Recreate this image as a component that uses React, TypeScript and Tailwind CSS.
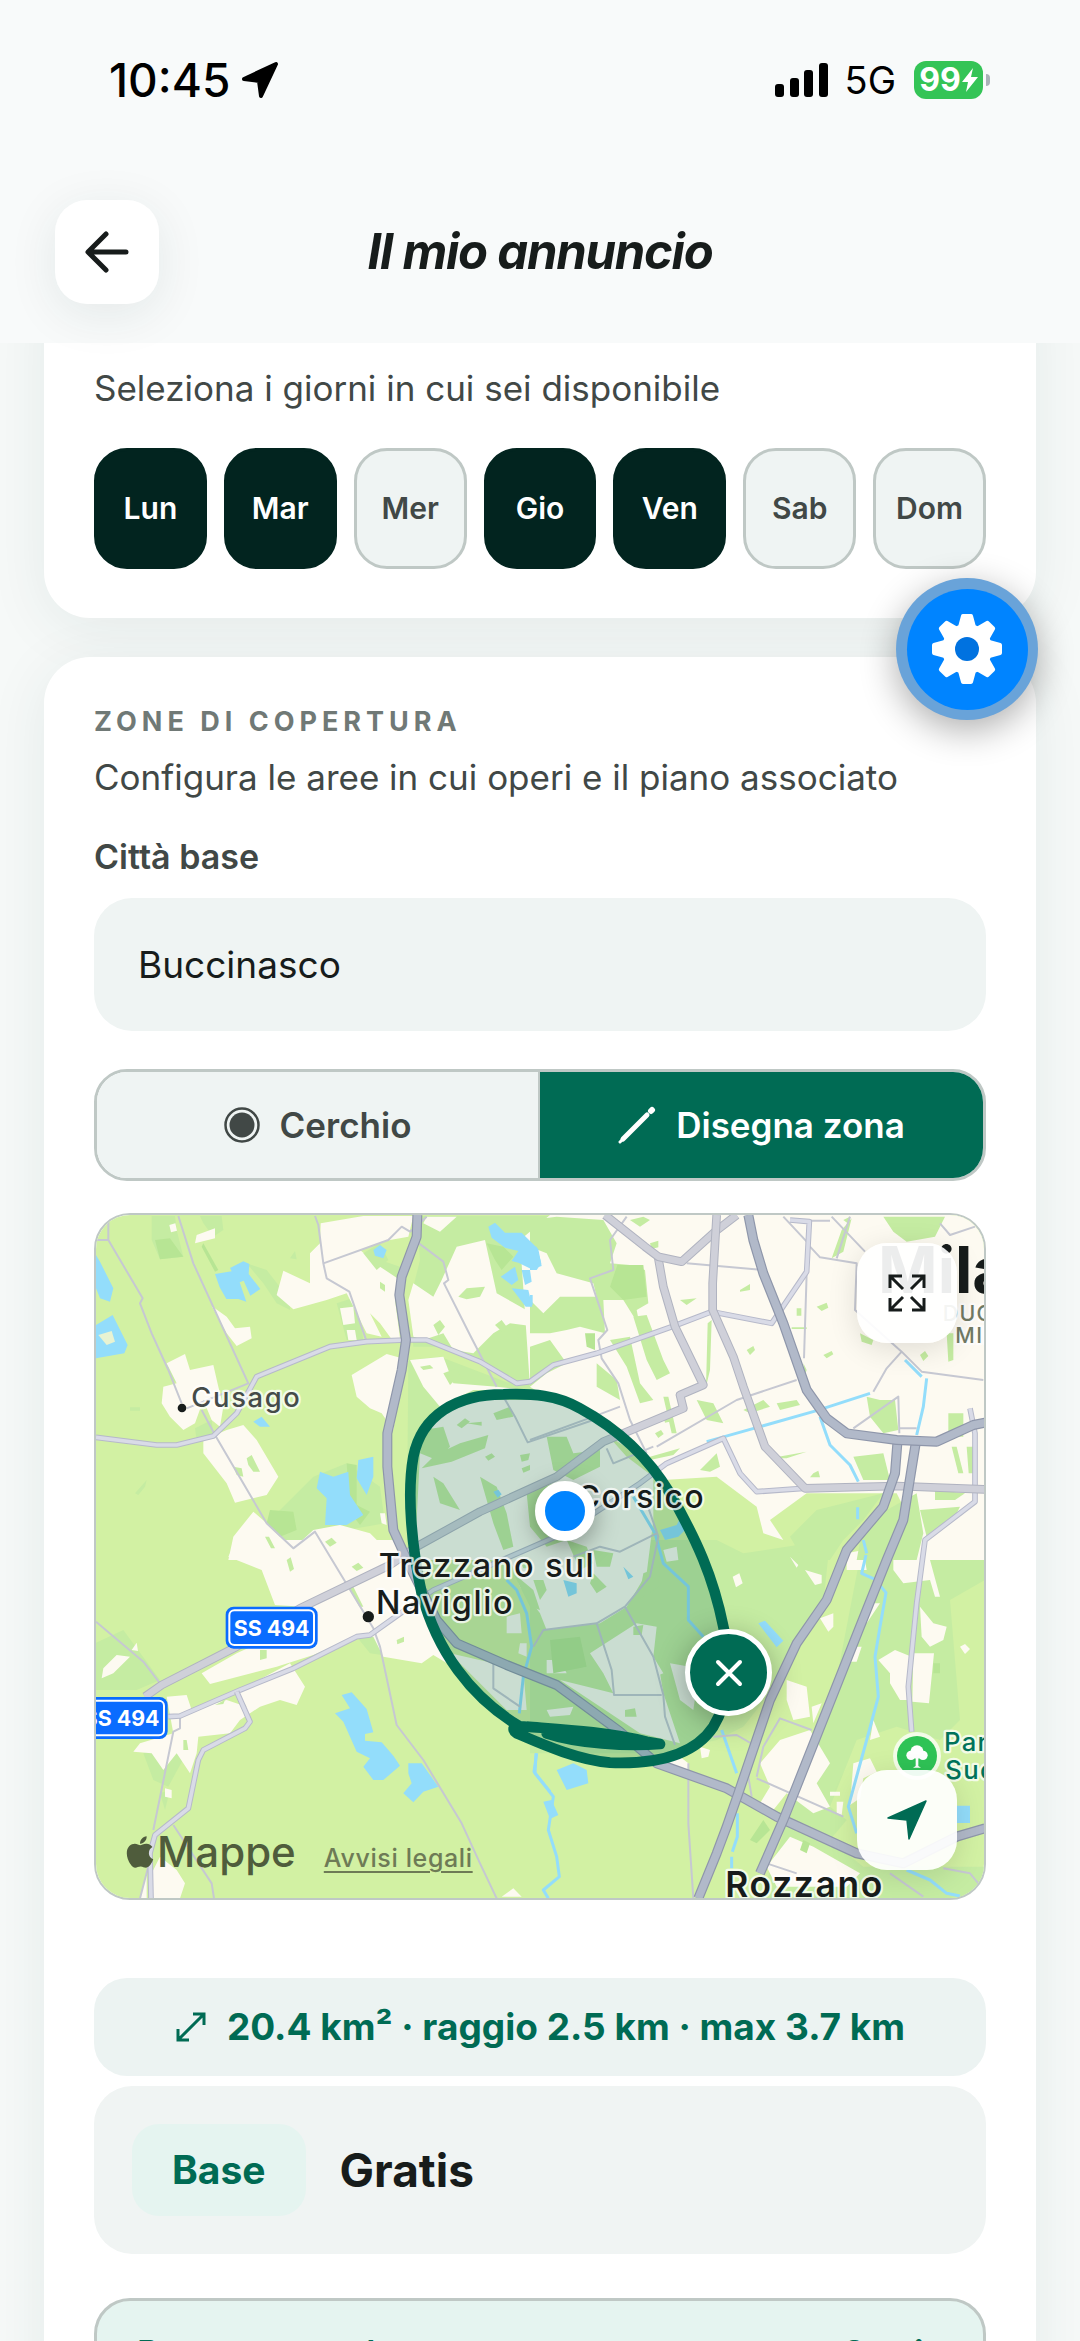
import { useState } from "react";
import type { ReactNode } from "react";
import { FaApple } from "react-icons/fa";

type Mode = "circle" | "draw";
type RoadKind = "highway" | "primary" | "secondary";
type Road = { kind: RoadKind; d: string };

const DAYS = ["Lun", "Mar", "Mer", "Gio", "Ven", "Sab", "Dom"];

const ROAD_STYLE: Record<
  RoadKind,
  { casing: string; fill: string; outer: number; inner: number }
> = {
  highway: { casing: "#8e96aa", fill: "#b1b9c9", outer: 30, inner: 23 },
  primary: { casing: "#b0b3c0", fill: "#cfd0d9", outer: 26, inner: 20 },
  secondary: { casing: "#b6b9ca", fill: "#d9dbe7", outer: 17, inner: 11 },
};

// Map sections: land polygons are drawn relative to the section's own origin.
const NW = "translate(0 0)";
const NE = "translate(1350 0)";
const SW = "translate(0 1020)";
const SE = "translate(1350 1020)";
const CENTER = "translate(840 480)";

const MEADOW: [string, string][] = [
  [
    NW,
    "M215 48H285L290 90L310 170L240 178L215 120Z M360 48H425L430 90L400 110L370 70Z M500 190L560 210L630 300L630 330L590 310L550 250Z M730 200L840 160L960 200L950 290L900 260L905 300L945 360L940 400L900 330L850 270Z M1010 48H1410V600L1300 560L1190 470L1090 440L1000 440L990 300L1020 180Z M260 500L310 480L345 540L280 545Z M700 830L800 790L900 860L915 970L800 990L640 1040L560 970L640 890Z M985 480L1080 470L1340 570L1410 600V1080H980Z M770 310L830 290L850 420L800 420Z M345 685L395 660L400 705L350 720Z M630 175l15-22l5 25Z M165 880l35-40l-5 20l-20 25Z M150 622h30v10h-30Z",
  ],
  [
    SW,
    "M45 310L130 270L240 420L170 450L48 450Z M190 640L290 600L330 620L265 740L220 720Z M830 290L890 290L905 345L870 340Z M240 760L270 750L255 810Z",
  ],
  [
    SE,
    "M0 0H560L640 40L900 0L880 190L790 310L720 460L640 560L560 600L400 640L0 640Z M1000 0H1365V120L1260 180L1290 540L1230 600L1100 560L980 600L900 800L950 840L900 900L1000 980H1365V1080H690L760 880L900 520Z",
  ],
];

const URBAN: [string, string][] = [
  [
    NW,
    "M722 70L850 48H1000L985 110L930 120L840 150L900 200L960 240L945 300L960 415L935 418L900 370L870 340L905 410L860 400L800 280L740 300L640 328L590 285L610 212L690 250L690 160L720 130Z M345 130L350 105L405 85L405 115Z M268 75l18-5l5 22l-18 5Z M780 325l40-5l5 50l-35 5Z M800 390l25 0l5 30l-25 0Z M395 318L440 350L465 385L510 380L515 415L470 438L440 400Z M260 490L315 462L330 510L400 495L415 560L430 620L420 680L395 660L370 600L345 670L310 690L270 650L245 610L250 560L290 550Z M370 720L440 690L490 675L530 720L595 830L560 885L465 908L440 850L370 760Z M815 525L920 462L985 480L960 560L940 690L905 640L870 625L830 590Z M1000 250L1060 290L1085 240L1130 140L1215 120L1250 280L1375 350L1370 380L1290 370L1240 400L1180 460L1120 450L1090 400L1030 420L1000 410L985 300Z M1030 70L1080 95L1130 50H1040Z M1370 80L1410 60V130L1380 120Z M990 480L1090 470L1120 550L1250 560L1340 570H1180L1080 620L1030 560Z M445 1080L460 1010L520 935L560 970L640 1045L700 990L780 975L870 1000L930 1060L960 1080Z M900 940l15 0l5 35l-15-5Z",
  ],
  [
    NE,
    "M-30 120L60 45H1370V1080H1180L1170 1020L1100 880L830 880L720 960L760 1020L700 1000L680 920L560 830L400 840L350 780L0 560Z",
  ],
  [
    SW,
    "M445 50L470 0H960L990 60L1010 160L1050 260L1110 375L1060 345L1025 370L910 350L880 290L830 290L700 345L590 380L390 432L365 400L470 340L600 280L670 200L585 195L545 90Z M500 500L470 455L630 370L675 440L650 495L600 480L540 500L480 540L450 580L355 590L350 640L330 700L290 640L250 690L215 640L160 635L180 610L280 580L260 470L320 465L335 510L440 480Z M65 415L70 385L110 345L150 350L100 400Z M155 330l15-22l4 25Z M215 1075V1000L240 950L290 990L315 1030L300 1075Z M180 1075L200 1000V1075Z M1265 1070L1300 1045L1325 1070Z M255 745l20 5l0 25l-20-5Z",
  ],
  [
    SE,
    "M1090 0h170v40l-60 20l30 110l-15 0l-15-50l-80 10l-30-40Z M1150 340h62l-15 150l-50-5Z M1045 360l50-30l50 20l0 40l-10 90l-25 0l-30-50l0-30Z M1170 200l40 50l40 10l-10 40l-40 20l-25-30Z M870 235l40-15l0 40l-15 15Z M1020 190l30 0l-40 60Z M980 320l15 0l-15 45l-20 0Z M770 420l60 20l10 90l-50 10l-20-60Z M845 500l30-10l-25 60Z M690 670l60-70l90-30l60 100l-40 60l40 70l-50 20l-80-60l-40 50l-40-20l30-50Z M970 670l50-15l20 40l-40 20l-10 60l-30 20Z M780 890L850 920L990 1000L950 1040L740 1040L710 980Z M1030 540l20 50l-30 10Z M825 90l50 15l0 25l-20 5Z M608 110l20-10l10 30l-20 12Z M780 50l25 25l-5 8Z M950 40l50-10l10 60l-60 0Z M450 650l25 20l0 20l-90-20Z M510 620l30 10l-5 20l-20 5Z M1290 320l15-8l15 15l-15 15Z M900 755h30v12h-30Z M920 785l20 0l-5 40l-15-5Z",
  ],
  [
    CENTER,
    "M180 280L200 180L260 120L600 120L720 200L800 290L880 350L880 480L870 560L860 640L800 740L720 790L560 810L540 760L480 680L450 600L170 600L170 480Z M270 880L490 930L500 1050L440 1050L350 960Z M600 960L760 1000L900 940L910 1000L960 1150L840 1120Z M690 880L830 790L890 800L880 890L910 940L760 1000L730 940Z M440 770l40-10l5 60l-45 0Z M480 850l20 0l0 40l-25-10Z M560 900l40 0l20 40l-60 0Z M560 1050l80-10l-10 25l-60 5Z M910 570l40-10l5 40l-35 5Z M930 910l60 10l20 60l-10 70l-40-30Z",
  ],
];

const PARKS: [string, string][] = [
  [
    NW,
    "M850 160L900 130L925 180L890 210Z M900 245l15 10l0 20l-15-10Z M1135 290L1160 265L1215 260L1200 290L1160 298Z M1060 375l20-15l15 20l-20 25Z M1245 375l20-15l15 20l-10 20Z M500 775l15-10l25 50l-20 0l-15-20Z M1020 500l30-5l10 10l-30 5Z M1090 520l40-15l10 20l-30 30Z M555 1010l12 0l18 35l-12 0Z M735 1025l20-12l15 15l-20 12Z M460 800l25 5l5 25l-20-5Z",
  ],
  [
    NE,
    "M0 60L80 50L220 60L260 130L240 190L300 195L345 210L355 310L320 330L330 380L280 300L220 300L225 400L150 380L110 390L60 400L0 400V300L40 340L90 290L200 290L190 250L80 220L50 160L0 140Z M545 360l-5 150l-12 50l5-190Z M1060 50H1245L1215 110L1130 125L1090 95Z M935 90l30-35l-25 100l-35 20Z M310 350L350 345L400 480L420 520L380 540L350 480Z M240 420L300 410L330 550L370 600L330 610L290 500Z M500 600l50 10l30 60l-50-10Z M640 630l60-30l20 20l-60 20Z M740 610l60-10l10 15l-60 15Z M400 590l15 0l25 110l-15 0Z M1010 590L1050 600L1095 600L1105 690L1060 700L1020 650Z M1255 640H1300V710H1255Z M1265 740h15l20 80h-15Z M1310 740h22v80h-16Z M970 770L1060 760L1080 840L1000 840Z M860 320l30-12l5 15l-20 10Z M880 465l25-12l5 10l-20 12Z M650 450l20-12l5 12l-15 15Z M990 400l40 20l-5 15l-30-10Z M1170 465l15-12l10 15l-15 15Z M1250 400h20v80l-15 5Z M630 270l30-18l0 18l-30 5Z M450 300l50-5l-30 20Z M800 325h14v22h-14Z M785 382h45v5h-45Z M300 60l40-10l20 10l-30 20Z M360 130l25-8l0 20l-20 5Z M820 490l10 20l-5 15Z M850 820l15-8l5 20h-30Z M720 775l110-20l-60 20Z M360 770l90-25l-20 20l-70 15Z M510 810L560 760L570 800L540 815Z M0 440L60 420L110 490L50 520L0 560Z M200 490L260 540L270 600L200 560Z M860 930L1060 880L1000 960L940 1020L900 1080L820 1080L780 1010Z M1000 970L1160 880L1180 1000L1160 1080H980Z M1170 930L1290 920L1270 960L1190 1010Z M1215 870l90 10l-30 20l-60 0Z M940 60l20-10l0 25Z M400 650l20-6l5 20l-20 4Z M375 700l18-10l8 12l-16 12Z",
  ],
  [
    SW,
    "M620 60l12-8l10 35l-12 8Z M815 80l20-12l15 15l-20 10Z M800 130l20 10l30 60l-12 0Z M540 330l20 0l0 25l-20 5Z M950 300l22-10l0 15l-20 8Z M405 495l30-15l-5 12Z M310 600l10 0l5 30l-15 0Z",
  ],
  [
    CENTER,
    "M190 210l60-10l20 60l-40 40l-50-20Z M560 230l60 0l20 50l80-10l0 50l-80 40l-60-30Z M300 250l85-25l-10 40l-100 40l-90 20l40-40Z M360 350l50 30l30 80l20 100l-30 10l-30-80Z M220 350l30 20l50 80l-60-20Z M500 400l80-30l40 170l-60 20l-50-60Z M620 540l60 20l20 50l-40 20Z M850 640l50-20l-5 60l-60 40Z M375 290l20-10l10 10l-20 12Z M480 285l30-5l-5 20l-20 5Z M485 325l25-10l0 15l-20 8Z M290 195l25-20l15 10l-25 20Z M320 190l45-5l0 12Z M400 160l50-20l10 30l-50 10Z M700 570l60 10l-10 40l-40 0Z M480 600l30-5l10 30l-30 0Z M460 640l60 50l20 60l-30-10Z M795 1050l30-5l5 25l-35 0Z M770 800l30-8l0 12l-30 10Z M820 800l30-5l-5 30l-25 0Z M520 660l30 0l10 30l-20 30Z M700 640l40 40l-30 20l-20-30Z",
  ],
];

const FOREST: [string, string][] = [
  [
    NW,
    "M225 120L270 115L310 170L240 178Z M570 930L640 935L650 990L600 1010L560 970Z M370 130l45 80l-10 5l-40-75Z M1220 130L1270 140L1300 170L1265 210L1245 180Z M800 790l30 5l0 120l40 20l-30 40l-30-40Z",
  ],
  [NE, "M262 195H340L350 290L280 300L240 260Z M165 400h30l0 50l-25-10Z"],
  [
    SE,
    "M60 300l90-10l20 90l-100 20Z M820 900l20 10l-10 30l-20-10Z M660 900l40-60l20 30l-40 40Z M1210 370h20v30h-20Z",
  ],
];

const WATER: [string, string][] = [
  [
    NW,
    "M405 222l50-8l-5-10l40-20l18 8l-2 30l35 45l-30 20l-20-45l-12 5l20 58l-24-8l-36 0l-20-35Z M48 165l12 20l40 80l-10 40l-30-10l-12-30Z M48 375l50-30l45 90l-10 25l-85 15Z M880 150l20-15l20 15l-10 25l-25-8Z M1225 80l20-12l30 30l50 0l50 50l10 50l-30 10l-40-20l-20-5l20-30l-40-10l-40-30Z M1262 230l43-30l10 40l-20 15Z M1325 210l25 0l5 35l-20 10Z M1295 265l50 5l12 50l-20 0Z M520 665l25-15l25 30l-30 0Z M720 815l40 15l45-15l5 70l40 60l-50 30l-65 0l5-80l-30-30Z M835 780l45-10l0 60l-20 55l-30-50Z",
  ],
  [NE, "M0 140l20 0l14 50l-14 20h-20Z M0 285h8v30h-8Z"],
  [
    SW,
    "M785 465l30-8l45 50l20 70l-25 5l0 20l50 5l35 40l20 30l-50 43l-30 0l-30-40l20-25l-40-20l-40-90l-25-25l45-15Z M985 670l40 0l50 70l-45 15l-30 32l-30-27l25-30l-10-30Z",
  ],
  [
    SE,
    "M685 250l20-8l55 60l-20 20Z M80 690l50-20l40 20l5 40l-65 20Z M1280 797h40v52h-40Z M40 785l25-5l20 45l-25 12Z",
  ],
  [
    CENTER,
    "M900 510l50-15l20-40l25 35l-40 40l-40 10Z M610 660l40 10l0 30l-25 10Z M790 620l30 30l-15 8Z M400 395l15-6l10 14l-12 10Z",
  ],
];

const STREAMS: [string, string][] = [
  [
    NE,
    "M1125 480L1175 530M1190 535L1180 620L1160 705M870 650L900 735L960 795L985 845M530 725L860 632L1020 580M983 922V958M1000 1020L1010 1060",
  ],
  [SW, "M1368 640L1365 700L1410 755"],
  [
    SE,
    "M1008 45L995 100L1035 118L1068 158L1050 260L1035 350L1045 470L1010 600L955 800L980 880M575 570L620 700M622 820V890L607 935M605 950V985M20 640L12 695L70 770L55 870L80 950L88 1010L40 1050L55 1075M1130 990L1200 1020L1250 1060L1290 1068",
  ],
  [
    CENTER,
    "M820 410L885 520L910 610L985 680V780L1030 830M440 660L470 690L500 760L515 860L490 950L478 1060",
  ],
];

const STREETS: [string, string][] = [
  [
    NW,
    "M85 45V120H48M85 120L188 295L180 310L215 400L265 510L305 610M295 48L340 190L505 550L320 625M705 48L715 75L730 190L740 235L808 275L860 425M730 190L925 120L965 80L990 95L1040 50M1010 125L1090 185L1105 240L1092 250L1170 405L1250 560M365 630L405 705L560 970L640 1045L705 995L880 1285L900 1340L950 1575L1030 1680L1145 1870L1200 1990L1250 2095M48 1265L190 1385L240 1450M300 1550L300 1585L280 1595L220 1890M180 2095L210 1980M280 1875L395 2050L402 2095",
  ],
  [
    NE,
    "M290 50L240 120L250 210L180 235L232 390L205 420L215 475L265 550L300 660L350 760M470 190L700 210M830 220L822 475M905 50L1005 155M840 140L870 172L980 190L975 330L1115 455L1175 515L1360 540M1115 455L1070 505L1030 575M970 685L1105 590L1108 700M760 50L835 130M960 50L920 175M1230 70L1260 105L1335 80M380 740L620 600L800 540M0 720L190 650L270 620M1108 685H1160M780 62H900",
  ],
  [
    SE,
    "M680 710L700 620L750 535L845 570M680 715L940 830M475 670V850L490 1075M710 970L800 1000M550 590L620 585L680 620L655 710L665 770M1080 1000L1180 1070M1240 985L1320 1000L1345 1030",
  ],
  [
    CENTER,
    "M430 110L465 170L503 247L700 180M400 900V985L480 1040M520 860L550 810L710 790L795 740L870 650L895 530L850 400M795 740L880 890L910 1005L915 1070L945 1155M710 790L755 930L762 1005H905M640 590L720 560L780 575L890 520M740 265L760 310L880 260",
  ],
];

const ROADS: Road[] = [
  {
    kind: "secondary",
    d: "M48 712L230 735L290 735L400 708L470 640L530 530L750 440L860 425L975 420L1040 420L1200 485L1310 550L1350 545L1420 495L1550 460L1790 375L1895 335L2075 370L2180 215L2188 65L2130 60",
  },
  {
    kind: "secondary",
    d: "M265 1550L300 1548L480 1470L640 1405L830 1310L870 1305L940 1255L1060 1170L1290 1070L1450 1000L1680 850L1760 790L1930 715L1980 820L2030 875L2170 865",
  },
  {
    kind: "secondary",
    d: "M470 1475L510 1565L495 1585L370 1650L355 1680L325 1825L225 1905L210 1960L213 2095",
  },
  {
    kind: "secondary",
    d: "M2670 625L2685 700V905L2535 1020L2510 1210L2485 1460L2495 1595",
  },
  {
    kind: "primary",
    d: "M195 1490L245 1455L470 1340L660 1225L930 1095L1010 1040L1200 935L1430 830L1570 725L1810 625L1800 585L1870 555L1785 380L1750 260L1735 175",
  },
  { kind: "primary", d: "M1575 45L1695 140L1735 170L1805 185L1905 95L1970 45" },
  {
    kind: "primary",
    d: "M1910 45L1898 250V330L1960 470L1990 560L2055 740L2175 865L2450 858L2715 868",
  },
  {
    kind: "highway",
    d: "M1012 45L1010 110L965 230L958 285L978 420L965 510L922 700V800L940 990L990 1100L1070 1260L1130 1330L1280 1395L1430 1455L1620 1595L1730 1690L1940 1765L2090 1850L2330 1960L2470 1990L2630 1910L2715 1885",
  },
  {
    kind: "highway",
    d: "M2452 730L2445 820L2410 920L2300 1050L2240 1200L2150 1330L2070 1500L1975 1780L1940 1880L1910 1960L1855 2095",
  },
  {
    kind: "highway",
    d: "M2507 730L2470 960L2420 1080L2340 1280L2110 1860L2040 2020",
  },
  {
    kind: "highway",
    d: "M2005 45L2020 120L2050 220L2110 370L2180 570L2240 655L2300 700L2450 720L2570 725L2680 675L2715 668",
  },
];

const ZONE_PATH =
  "M480 1100C330 1010 230 870 185 700C155 560 140 400 160 290C185 165 290 103 430 103C520 100 590 105 660 145C780 210 870 300 930 400C1010 540 1060 650 1090 800C1115 900 1110 1020 1060 1100C1000 1190 880 1213 750 1208C650 1200 540 1150 470 1120C450 1105 465 1095 500 1100C600 1108 740 1115 860 1145L900 1152C800 1160 650 1150 560 1120";

function Land({ layer, fill }: { layer: [string, string][]; fill: string }) {
  return (
    <g fill={fill}>
      {layer.map(([section, d]) => (
        <path key={section} transform={section} d={d} />
      ))}
    </g>
  );
}

function Lines({
  layer,
  stroke,
  width,
}: {
  layer: [string, string][];
  stroke: string;
  width: number;
}) {
  return (
    <g fill="none" stroke={stroke} strokeWidth={width} strokeLinejoin="round">
      {layer.map(([section, d]) => (
        <path key={section} transform={section} d={d} />
      ))}
    </g>
  );
}

function RoadShield({ x, y }: { x: number; y: number }) {
  return (
    <g transform={`translate(${x} ${y})`}>
      <rect width="276" height="126" rx="24" fill="#0a6cff" />
      <rect
        x="11"
        y="11"
        width="254"
        height="104"
        rx="15"
        fill="none"
        stroke="#fff"
        strokeWidth="6"
      />
      <text
        x="138"
        y="87"
        textAnchor="middle"
        fontSize="64"
        fontWeight="700"
        fill="#fff"
      >
        SS 494
      </text>
    </g>
  );
}

function MapCanvas() {
  return (
    <svg
      viewBox="48 45 2664 2049"
      preserveAspectRatio="xMidYMid slice"
      className="block h-full w-full"
      role="img"
      aria-label="Mappa della zona di copertura"
    >
      <rect x="0" y="0" width="2800" height="2150" fill="#d2f1a3" />
      <Land layer={MEADOW} fill="#c5eca2" />
      <Land layer={URBAN} fill="#fdfaf1" />
      <Land layer={PARKS} fill="#c5eca2" />
      <Land layer={FOREST} fill="#b7e594" />
      <Land layer={WATER} fill="#93ddfb" />
      <path d="M55 405L95 393L105 425L80 435Z" fill="#e8f3d2" />
      <Lines layer={STREAMS} stroke="#93ddfb" width={9} />
      <Lines layer={STREETS} stroke="#c6c8d2" width={6} />

      <g fill="none" strokeLinejoin="round">
        {ROADS.map((road) => (
          <g key={road.d}>
            <path
              d={road.d}
              stroke={ROAD_STYLE[road.kind].casing}
              strokeWidth={ROAD_STYLE[road.kind].outer}
            />
            <path
              d={road.d}
              stroke={ROAD_STYLE[road.kind].fill}
              strokeWidth={ROAD_STYLE[road.kind].inner}
            />
          </g>
        ))}
      </g>

      <path
        transform={CENTER}
        d={ZONE_PATH}
        fill="#006b54"
        fillOpacity="0.2"
        stroke="#006b54"
        strokeWidth="32"
        strokeLinecap="round"
        strokeLinejoin="round"
      />

      <RoadShield x={437} y={1220} />
      <RoadShield x={-13} y={1491} />

      <circle cx="306" cy="624" r="13" fill="#171c1b" />
      <circle cx="865" cy="1250" r="17" fill="#171c1b" />

      <g
        fill="#171c1b"
        stroke="#fff"
        strokeOpacity="0.75"
        strokeWidth="14"
        strokeLinejoin="round"
        paintOrder="stroke"
        fontWeight="500"
      >
        <text x="334" y="622" fontSize="82" letterSpacing="5" fill="#454b49">
          Cusago
        </text>
        <text x="1490" y="925" fontSize="95" letterSpacing="5">
          Corsico
        </text>
        <text x="896" y="1132" fontSize="97" letterSpacing="5">
          Trezzano sul
        </text>
        <text x="888" y="1242" fontSize="97" letterSpacing="5">
          Naviglio
        </text>
        <text x="1936" y="2092" fontSize="106" fontWeight="600" letterSpacing="5">
          Rozzano
        </text>
        <text x="2394" y="278" fontSize="192" fontWeight="700" stroke="none">
          Milano
        </text>
        <text x="2588" y="362" fontSize="64" letterSpacing="4" fill="#717a64">
          DUOMO
        </text>
        <text x="2626" y="428" fontSize="64" letterSpacing="4" fill="#717a64">
          MILANO
        </text>
        <text x="2592" y="1652" fontSize="77" letterSpacing="4" fill="#00735a">
          Parco
        </text>
        <text x="2596" y="1738" fontSize="77" letterSpacing="4" fill="#00735a">
          Sud
        </text>
      </g>

      <circle cx="2511" cy="1668" r="72" fill="#fff" fillOpacity="0.75" />
      <circle cx="2511" cy="1668" r="60" fill="#2fc356" />
      <g fill="#fff">
        <circle cx="2511" cy="1656" r="20" />
        <circle cx="2493" cy="1666" r="14" />
        <circle cx="2529" cy="1666" r="14" />
        <path d="M2507 1672h8v26l8 5h-24l8-5Z" />
      </g>
    </svg>
  );
}

function MapButton({
  label,
  className,
  children,
}: {
  label: string;
  className: string;
  children: ReactNode;
}) {
  return (
    <button
      type="button"
      aria-label={label}
      className={`absolute right-[27px] flex h-[100px] w-[100px] items-center justify-center rounded-[30px] bg-white/92 shadow-[0_6px_30px_rgba(0,0,0,0.12)] ${className}`}
    >
      {children}
    </button>
  );
}

function CoverageMap() {
  return (
    <div className="relative mt-8 h-[687px] overflow-hidden rounded-[36px] border-2 border-[#bfc8c5]">
      <MapCanvas />

      <span className="absolute top-[266px] left-[439px] h-[60px] w-[60px] rounded-full border-10 border-white bg-[#0084ff] shadow-[0_6px_24px_rgba(0,0,0,0.35)]" />

      <button
        type="button"
        aria-label="Cancella zona"
        className="absolute top-[414px] left-[589px] flex h-[87px] w-[87px] items-center justify-center rounded-full border-5 border-white bg-[#006b54] shadow-[0_6px_30px_rgba(0,0,0,0.3)]"
      >
        <svg viewBox="0 0 28 28" className="h-7 w-7" aria-hidden>
          <path
            d="M3 3l22 22M25 3L3 25"
            stroke="#fff"
            strokeWidth="4"
            strokeLinecap="round"
          />
        </svg>
      </button>

      <MapButton label="Espandi mappa" className="top-[28px]">
        <svg
          viewBox="0 0 38 38"
          className="h-[38px] w-[38px]"
          fill="none"
          stroke="#171c1b"
          strokeWidth="3"
          aria-hidden
        >
          <path d="M14 2H2v12M2 2l13 13M24 2h12v12M36 2L23 15M14 36H2V24M2 36l13-13M24 36h12V24M36 36L23 23" />
        </svg>
      </MapButton>

      <MapButton label="La mia posizione" className="bottom-[28px]">
        <svg viewBox="0 0 40 40" className="h-10 w-10" aria-hidden>
          <path
            d="M39 1L22 39L20 20L1 18Z"
            fill="#006b54"
            stroke="#006b54"
            strokeWidth="1.5"
            strokeLinejoin="round"
          />
        </svg>
      </MapButton>

      <div className="absolute bottom-[21px] left-[27px] flex items-baseline text-[#4f5c3c]">
        <FaApple className="h-[36px] w-[34px] self-center" aria-hidden />
        <span className="text-[42px] leading-[50px] font-medium">Mappe</span>
        <a
          href="#legal"
          className="ml-7 text-[25px] leading-[30px] font-medium tracking-wide text-[#6e7b56] underline decoration-2 underline-offset-4"
        >
          Avvisi legali
        </a>
      </div>
    </div>
  );
}

function StatusBar() {
  return (
    <div className="flex items-center justify-between pt-[52px] pr-[90px] pl-[109px] text-black">
      <div className="flex items-center gap-[11px]">
        <span className="text-[46px] leading-[56px] font-medium">10:45</span>
        <svg viewBox="0 0 38 38" className="h-[38px] w-[38px]" aria-hidden>
          <path
            d="M35 3L20 35L18 20L3 18Z"
            fill="#000"
            stroke="#000"
            strokeWidth="4"
            strokeLinejoin="round"
          />
        </svg>
      </div>
      <div className="flex items-center">
        <svg viewBox="0 0 54 34" className="h-[34px] w-[54px]" aria-hidden>
          <rect x="0" y="21" width="9" height="13" rx="3" />
          <rect x="15" y="15" width="9" height="19" rx="3" />
          <rect x="29" y="7" width="9" height="27" rx="3" />
          <rect x="44" y="0" width="9" height="34" rx="3" />
        </svg>
        <span className="ml-4 text-[38px] leading-[56px]">5G</span>
        <div className="ml-[18px] flex h-[38px] w-[69px] items-center justify-center gap-px rounded-[12px] bg-[#34c456] text-white">
          <span className="text-[32px] leading-[38px] font-bold">99</span>
          <svg viewBox="0 0 16 24" className="h-6 w-4" aria-hidden>
            <path d="M11 0L0 14h6L4 24L16 9H9Z" fill="#fff" />
          </svg>
        </div>
        <span className="ml-[3px] h-3 w-1 rounded-r-full bg-[#aab2b8]" />
      </div>
    </div>
  );
}

function Header() {
  return (
    <header className="relative z-10 shrink-0 bg-[#f8fafa] pb-[39px]">
      <StatusBar />
      <div className="mt-[92px] grid grid-cols-[104px_1fr_104px] items-center px-[55px]">
        <button
          type="button"
          aria-label="Indietro"
          className="flex h-[104px] w-[104px] items-center justify-center rounded-[32px] bg-white shadow-[0_10px_50px_rgba(20,60,60,0.09)]"
        >
          <svg
            viewBox="0 0 46 46"
            className="h-[46px] w-[46px]"
            fill="none"
            stroke="#171c1b"
            strokeWidth="5"
            strokeLinecap="round"
            strokeLinejoin="round"
            aria-hidden
          >
            <path d="M22 5L4 23L22 41M5 23H42" />
          </svg>
        </button>
        <h1 className="text-center text-[49px] leading-[60px] font-bold tracking-tight text-[#171c1b] italic">
          Il mio annuncio
        </h1>
      </div>
    </header>
  );
}

function SectionHeading({ title, text }: { title: string; text: string }) {
  return (
    <>
      <h2 className="text-[27px] leading-[34px] font-bold tracking-[5px] whitespace-nowrap text-[#707976] uppercase">
        {title}
      </h2>
      <p className="mt-[14px] text-[35px] leading-[48px] text-[#414846]">
        {text}
      </p>
    </>
  );
}

function DayPicker() {
  const [selected, setSelected] = useState(["Lun", "Mar", "Gio", "Ven"]);

  const toggle = (day: string) =>
    setSelected((days) =>
      days.includes(day) ? days.filter((d) => d !== day) : [...days, day],
    );

  return (
    <div className="mt-9 grid grid-cols-7 gap-[17px]">
      {DAYS.map((day) => {
        const active = selected.includes(day);
        return (
          <button
            key={day}
            type="button"
            aria-pressed={active}
            onClick={() => toggle(day)}
            className={`h-[121px] rounded-[33px] border-3 text-[30px] font-semibold ${
              active
                ? "border-[#02241f] bg-[#02241f] text-white"
                : "border-[#bfc8c5] bg-[#eff4f3] text-[#414846]"
            }`}
          >
            {day}
          </button>
        );
      })}
    </div>
  );
}

function ModeToggle() {
  const [mode, setMode] = useState<Mode>("draw");

  const tone = (value: Mode) =>
    mode === value ? "bg-[#006b54] text-white" : "bg-[#eff4f3] text-[#414846]";

  return (
    <div className="mt-[38px] grid h-[112px] grid-cols-2 overflow-hidden rounded-[33px] border-3 border-[#bfc8c5] text-[35px] font-semibold">
      <button
        type="button"
        aria-pressed={mode === "circle"}
        onClick={() => setMode("circle")}
        className={`flex items-center justify-center gap-5 border-r-2 border-[#bfc8c5] ${tone("circle")}`}
      >
        <svg viewBox="0 0 36 36" className="h-9 w-9" aria-hidden>
          <circle
            cx="18"
            cy="18"
            r="16.5"
            fill="none"
            stroke="currentColor"
            strokeWidth="2.5"
          />
          <circle cx="18" cy="18" r="12.5" fill="currentColor" />
        </svg>
        Cerchio
      </button>
      <button
        type="button"
        aria-pressed={mode === "draw"}
        onClick={() => setMode("draw")}
        className={`flex items-center justify-center gap-5 ${tone("draw")}`}
      >
        <svg
          viewBox="0 0 38 38"
          className="h-[38px] w-[38px]"
          stroke="currentColor"
          strokeLinecap="round"
          aria-hidden
        >
          <path d="M5 33L29 9" strokeWidth="5" />
          <path d="M2 36L6 32" strokeWidth="3" />
          <path d="M33 5L34 4" strokeWidth="6" />
        </svg>
        Disegna zona
      </button>
    </div>
  );
}

function SettingsFab() {
  return (
    <button
      type="button"
      aria-label="Impostazioni"
      className="absolute top-[578px] right-[42px] z-20 flex h-[142px] w-[142px] items-center justify-center rounded-full bg-[#69a3d9] shadow-[0_10px_36px_rgba(0,0,0,0.32)]"
    >
      <span className="flex h-[121px] w-[121px] items-center justify-center rounded-full bg-[#0084ff]">
        <svg viewBox="-36 -36 72 72" className="h-[72px] w-[72px]" aria-hidden>
          <g fill="#fff" stroke="#fff" strokeWidth="4" strokeLinejoin="round">
            <circle r="23" />
            {[0, 45, 90, 135, 180, 225, 270, 315].map((angle) => (
              <path
                key={angle}
                transform={`rotate(${angle})`}
                d="M-7 -22L-4 -33H4L7 -22Z"
              />
            ))}
          </g>
          <circle r="12" fill="#0072e0" />
        </svg>
      </span>
    </button>
  );
}

const CARD =
  "rounded-[46px] bg-white px-[50px] pt-12 shadow-[0_10px_60px_rgba(20,60,60,0.08)]";

export default function App() {
  const [city, setCity] = useState("Buccinasco");

  return (
    <div className="relative flex h-screen flex-col overflow-hidden bg-[#f6f9f8] font-['Inter',sans-serif]">
      <Header />
      <SettingsFab />

      <main className="min-h-0 flex-1 overflow-hidden px-11">
        <section className={`-mt-[75px] pb-[49px] ${CARD}`}>
          <SectionHeading
            title="Disponibilità settimanale"
            text="Seleziona i giorni in cui sei disponibile"
          />
          <DayPicker />
        </section>

        <section className={`mt-[39px] pb-[49px] ${CARD}`}>
          <SectionHeading
            title="Zone di copertura"
            text="Configura le aree in cui operi e il piano associato"
          />

          <label
            htmlFor="city"
            className="mt-9 block text-[34px] leading-10 font-semibold text-[#414846]"
          >
            Città base
          </label>
          <input
            id="city"
            value={city}
            onChange={(e) => setCity(e.target.value)}
            className="mt-[21px] block h-[133px] w-full rounded-[38px] bg-[#eff4f3] px-11 text-[37px] text-[#171c1b]"
          />

          <ModeToggle />
          <CoverageMap />

          <div className="mt-[78px] flex h-[98px] items-center justify-center gap-5 rounded-[33px] bg-[#ecf3f2] text-[37px] font-bold text-[#006b54]">
            <svg
              viewBox="0 0 32 32"
              className="h-8 w-8"
              fill="none"
              stroke="currentColor"
              strokeWidth="3"
              aria-hidden
            >
              <path d="M3 29L29 3M18 3h11v11M3 18v11h11" />
            </svg>
            20.4 km² · raggio 2.5 km · max 3.7 km
          </div>

          <div className="mt-[10px] flex h-[168px] items-center gap-[34px] rounded-[38px] bg-[#f0f4f3] px-[38px]">
            <span className="flex h-[92px] items-center rounded-[27px] bg-[#e5f4f0] px-10 text-[39px] font-bold text-[#006b54]">
              Base
            </span>
            <span className="text-[46px] font-bold text-[#171c1b]">Gratis</span>
          </div>

          <div className="mt-11 flex items-center justify-between rounded-[36px] border-3 border-[#bfc8c5] bg-[#e5f4f0] px-10 py-[30px] text-[35px] leading-[44px] font-semibold text-[#006b54]">
            <span>Prezzo annuale</span>
            <span className="font-bold">Gratis</span>
          </div>
        </section>
      </main>
    </div>
  );
}
